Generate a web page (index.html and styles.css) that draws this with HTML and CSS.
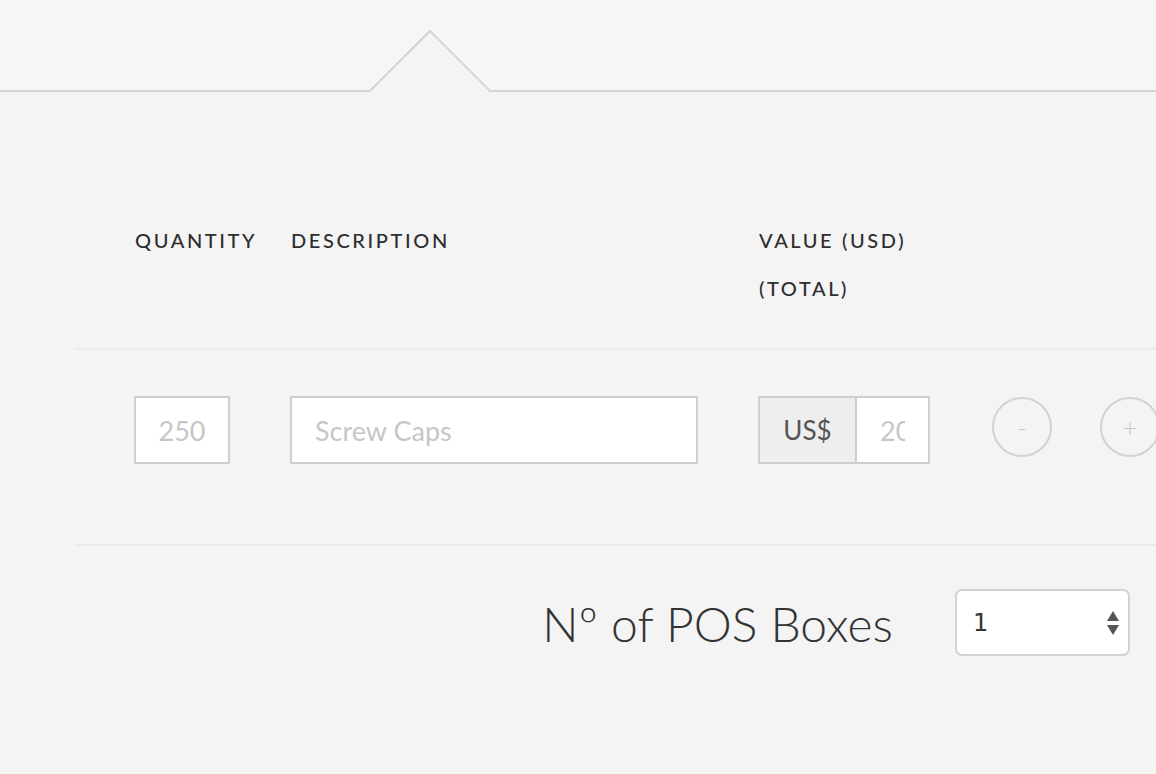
FILE: index.html
```html
<!DOCTYPE html>
<html lang="en">
<head>
<meta charset="utf-8">
<title>POS Boxes</title>
<link rel="stylesheet" href="styles.css">
</head>
<body>
<div class="top">
  <svg class="notch" width="1156" height="92" viewBox="0 0 1156 92">
    <polygon points="0,91 370,91 430,31 490,91 1156,91 1156,92 0,92" fill="#f4f4f4"/>
    <polyline points="0,91 370,91 430,31 490,91 1156,91" fill="none" stroke="#d4d4d4" stroke-width="2"/>
  </svg>
</div>
<main class="panel">
  <div class="heads">
    <div class="head col-qty">QUANTITY</div>
    <div class="head col-desc">DESCRIPTION</div>
    <div class="head col-val">VALUE (USD)<br>(TOTAL)</div>
  </div>
  <div class="row">
    <input class="field col-qty center" type="text" placeholder="250">
    <input class="field col-desc" type="text" placeholder="Screw Caps">
    <div class="group col-val">
      <span class="addon">US$</span>
      <input class="field group-input" type="text" placeholder="200">
    </div>
    <button class="circle minus">-</button>
    <button class="circle plus">+</button>
  </div>
  <div class="foot">
    <div class="foot-inner">
      <label class="foot-label">Nº of POS Boxes</label>
      <div class="select">
        <span class="select-value">1</span>
        <svg class="select-arrows" width="14" height="28" viewBox="0 0 14 28">
          <polygon points="7,2 13,12 1,12" fill="#555"/>
          <polygon points="1,16 13,16 7,26" fill="#555"/>
        </svg>
      </div>
    </div>
  </div>
</main>
</body>
</html>
```
FILE: styles.css
```css
html, body {
  margin: 0;
  padding: 0;
}
body {
  background: #f4f4f4;
  font-family: "Lato", "Noto Sans", sans-serif;
  color: #333;
  overflow: hidden;
  width: 1156px;
  height: 774px;
}
.top {
  height: 92px;
  background: #f6f6f6;
}
.notch {
  display: block;
}
.panel {
  margin-left: 75px;
  width: 1100px;
}
.heads {
  display: flex;
  gap: 60px;
  padding: 124px 0 36px 60px;
  border-bottom: 2px solid #ebebeb;
}
.head {
  font-size: 20px;
  line-height: 48px;
  letter-spacing: 2.6px;
  font-weight: 500;
  color: #2e2e2e;
  white-space: nowrap;
}
.col-qty { width: 96px; }
.col-desc { width: 408px; }
.col-val { width: 172px; }
.row {
  display: flex;
  gap: 60px;
  align-items: flex-start;
  padding: 46px 0 80px 59px;
  border-bottom: 2px solid #ebebeb;
}
.field {
  box-sizing: border-box;
  height: 68px;
  border: 2px solid #cfcfcf;
  background: #fff;
  font-family: "Lato", "Noto Sans", sans-serif;
  font-size: 27px;
  color: #333;
  padding: 0 23px;
  outline: none;
  margin: 0;
}
.field::placeholder {
  color: #c6c6c6;
}
.center {
  text-align: center;
  padding: 0 10px;
}
.group {
  display: flex;
  height: 68px;
  box-sizing: border-box;
  border: 2px solid #cfcfcf;
}
.addon {
  width: 97px;
  box-sizing: border-box;
  background: #eeeeee;
  border-right: 2px solid #cfcfcf;
  display: flex;
  align-items: center;
  justify-content: center;
  font-size: 26px;
  color: #555;
}
.group-input {
  border: none;
  height: 64px;
  width: 71px;
  padding: 0 23px;
}
.circle {
  width: 60px;
  height: 60px;
  border-radius: 50%;
  border: 2px solid #d2d2d2;
  background: transparent;
  color: #c8c8c8;
  font-family: "Lato", sans-serif;
  font-weight: 300;
  font-size: 26px;
  padding: 0;
  margin-top: 1px;
  flex: none;
}
.minus { margin-left: 2px; }
.plus { margin-left: -12px; }
.foot {
  padding-top: 43px;
}
.foot-inner {
  width: 1055px;
  display: flex;
  justify-content: flex-end;
  align-items: center;
  gap: 62px;
}
.foot-label {
  font-size: 48px;
  font-weight: 300;
  color: #333;
  margin-top: 2px;
}
.select {
  box-sizing: border-box;
  width: 175px;
  height: 67px;
  border: 2px solid #d2d2d2;
  border-radius: 7px;
  background: #fff;
  display: flex;
  align-items: center;
  justify-content: space-between;
  padding: 0 8px 0 16px;
}
.select-value {
  font-family: "DejaVu Sans", sans-serif;
  font-size: 24px;
  color: #333;
}
.select-arrows {
  display: block;
}
```
